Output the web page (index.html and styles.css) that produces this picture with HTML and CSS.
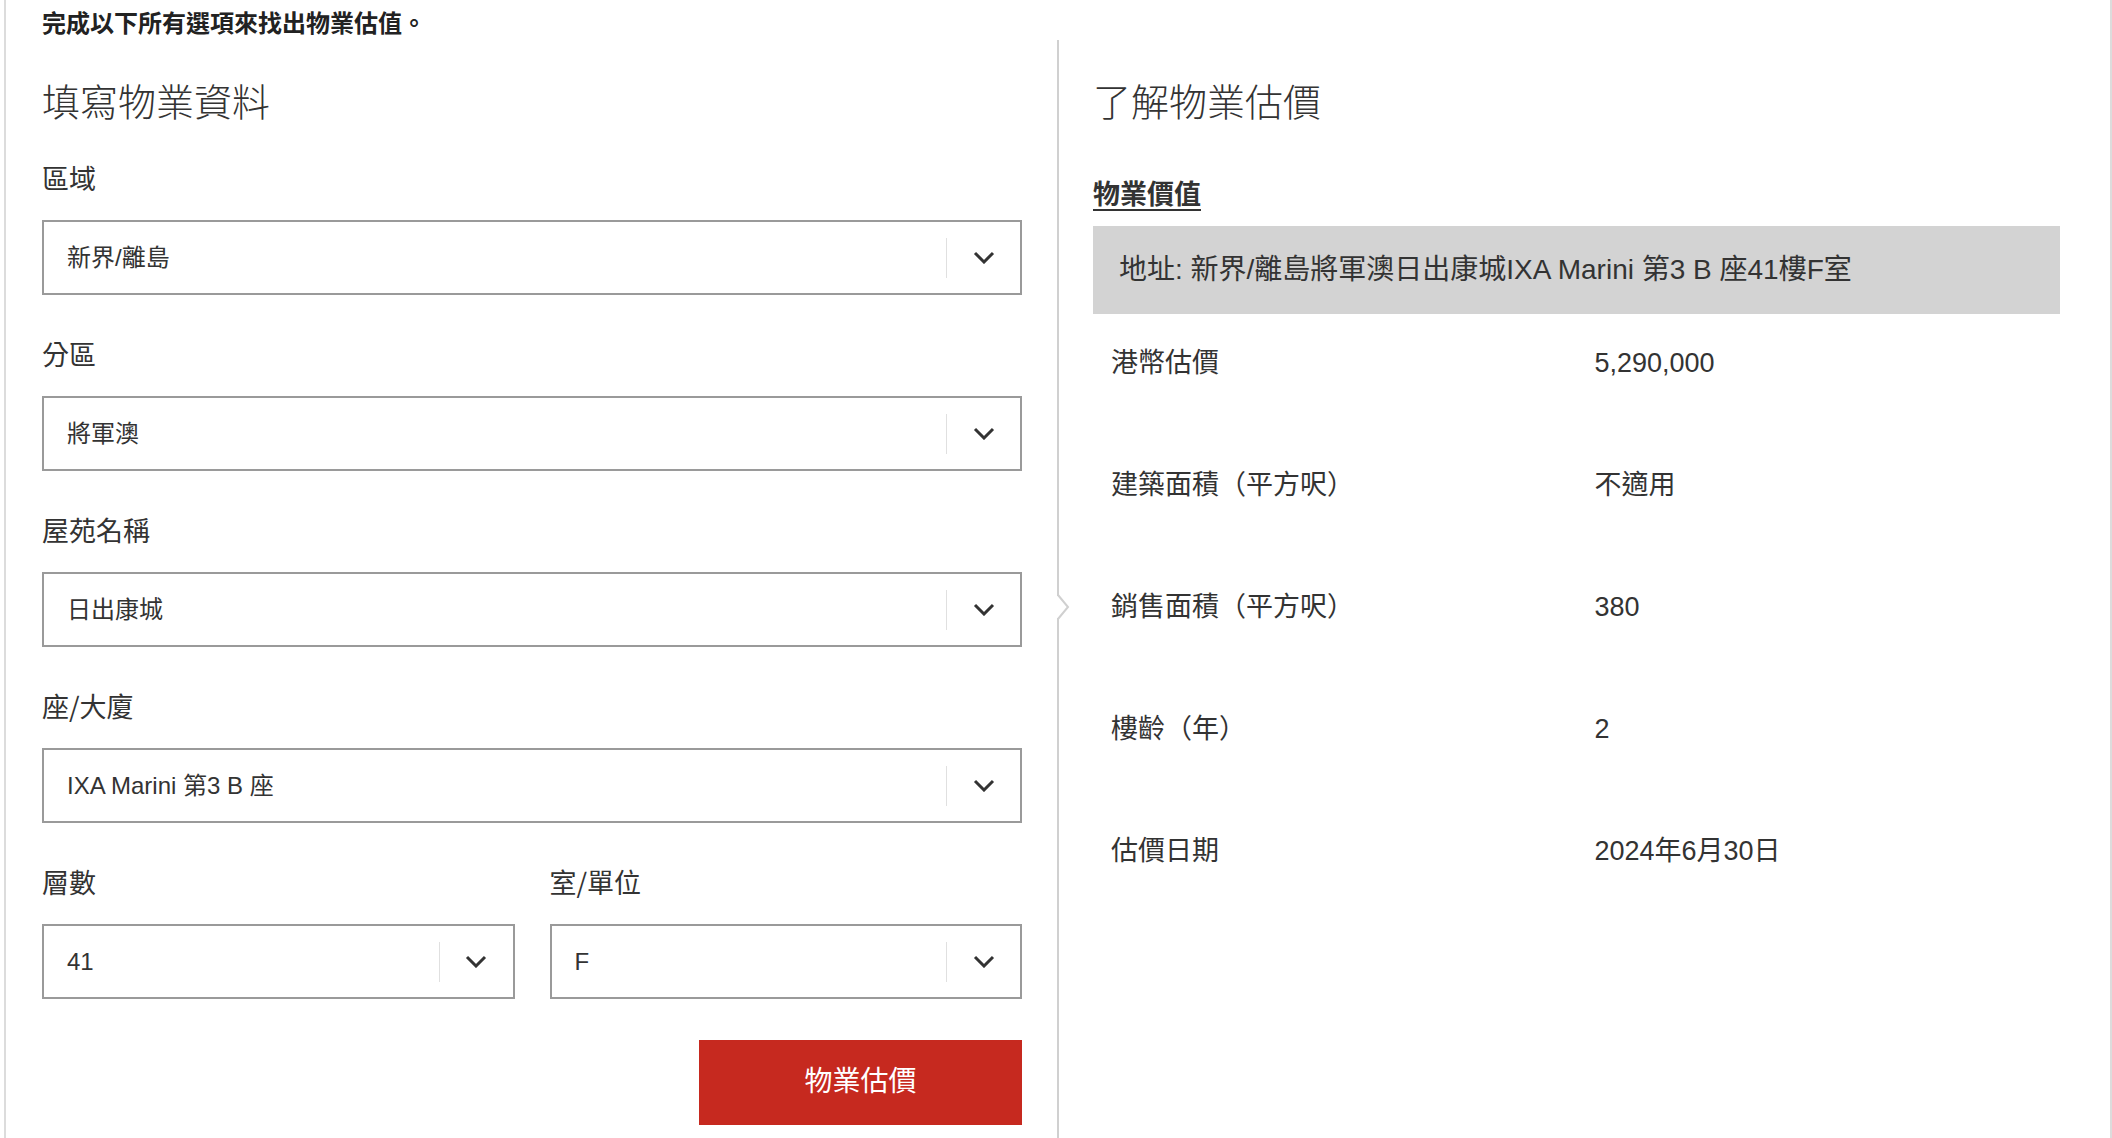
FILE: index.html
```html
<!DOCTYPE html>
<html lang="zh-Hant">
<head>
<meta charset="utf-8">
<title>物業估價</title>
<link rel="stylesheet" href="styles.css">
</head>
<body>
<div class="page">
  <p class="intro">完成以下所有選項來找出物業估值。</p>
  <div class="columns">
    <section class="form-col">
      <h2 class="col-title">填寫物業資料</h2>

      <div class="field">
        <div class="field-label">區域</div>
        <div class="select">
          <span class="select-value">新界/離島</span>
          <span class="select-arrow"><svg viewBox="0 0 22 13" width="22" height="13"><polyline points="2,2 11,11 20,2" fill="none" stroke="#333" stroke-width="3"/></svg></span>
        </div>
      </div>

      <div class="field">
        <div class="field-label">分區</div>
        <div class="select">
          <span class="select-value">將軍澳</span>
          <span class="select-arrow"><svg viewBox="0 0 22 13" width="22" height="13"><polyline points="2,2 11,11 20,2" fill="none" stroke="#333" stroke-width="3"/></svg></span>
        </div>
      </div>

      <div class="field">
        <div class="field-label">屋苑名稱</div>
        <div class="select">
          <span class="select-value">日出康城</span>
          <span class="select-arrow"><svg viewBox="0 0 22 13" width="22" height="13"><polyline points="2,2 11,11 20,2" fill="none" stroke="#333" stroke-width="3"/></svg></span>
        </div>
      </div>

      <div class="field">
        <div class="field-label">座/大廈</div>
        <div class="select">
          <span class="select-value">IXA Marini 第3 B 座</span>
          <span class="select-arrow"><svg viewBox="0 0 22 13" width="22" height="13"><polyline points="2,2 11,11 20,2" fill="none" stroke="#333" stroke-width="3"/></svg></span>
        </div>
      </div>

      <div class="field-row">
        <div class="field">
          <div class="field-label">層數</div>
          <div class="select">
            <span class="select-value">41</span>
            <span class="select-arrow"><svg viewBox="0 0 22 13" width="22" height="13"><polyline points="2,2 11,11 20,2" fill="none" stroke="#333" stroke-width="3"/></svg></span>
          </div>
        </div>
        <div class="field">
          <div class="field-label">室/單位</div>
          <div class="select">
            <span class="select-value">F</span>
            <span class="select-arrow"><svg viewBox="0 0 22 13" width="22" height="13"><polyline points="2,2 11,11 20,2" fill="none" stroke="#333" stroke-width="3"/></svg></span>
          </div>
        </div>
      </div>

      <div class="actions">
        <button class="submit" type="button">物業估價</button>
      </div>

      <svg class="notch" viewBox="0 0 14 30" width="14" height="30">
        <rect x="0" y="3" width="3" height="22" fill="#fff"/>
        <polyline points="1,2 11,14 1,26" fill="none" stroke="#d0d0d0" stroke-width="2"/>
      </svg>
    </section>

    <section class="result-col">
      <h2 class="col-title">了解物業估價</h2>
      <div class="result-subtitle">物業價值</div>
      <div class="address">地址: 新界/離島將軍澳日出康城IXA Marini 第3 B 座41樓F室</div>
      <div class="result-grid">
        <div class="cell">港幣估價</div><div class="cell">5,290,000</div>
        <div class="cell">建築面積（平方呎）</div><div class="cell">不適用</div>
        <div class="cell">銷售面積（平方呎）</div><div class="cell">380</div>
        <div class="cell">樓齡（年）</div><div class="cell">2</div>
        <div class="cell">估價日期</div><div class="cell">2024年6月30日</div>
      </div>
    </section>
  </div>
</div>
</body>
</html>
```
FILE: styles.css
```css
* { box-sizing: border-box; }

html, body {
  margin: 0;
  padding: 0;
  background: #fff;
}

body {
  font-family: "Noto Sans CJK TC", "Noto Sans", "Liberation Sans", sans-serif;
  color: #333;
}

.page {
  margin-left: 4px;
  min-height: 1138px;
  border-left: 2px solid #dcdcdc;
  border-right: 2px solid #dcdcdc;
  display: flex;
  flex-direction: column;
}

.intro {
  margin: 0;
  padding: 7px 0 3px 36px;
  font-size: 24px;
  line-height: 30px;
  font-weight: 700;
  color: #222;
}

.columns {
  flex: 1;
  display: flex;
}

.form-col {
  position: relative;
  width: 1053px;
  flex: none;
  padding: 37px 35px 13px 36px;
  border-right: 2px solid #d0d0d0;
}

.result-col {
  flex: 1;
  padding: 37px 50px 0 34px;
}

.col-title {
  margin: 0 0 38px 0;
  font-size: 38px;
  line-height: 46px;
  font-weight: 300;
  color: #333;
}

.field {
  margin-bottom: 42px;
}

.field-label {
  font-size: 27px;
  line-height: 34px;
  margin-bottom: 25px;
  color: #333;
}

.select {
  height: 75px;
  border: 2px solid #9a9a9a;
  display: flex;
  align-items: center;
  background: #fff;
}

.select-value {
  flex: 1;
  padding-left: 23px;
  font-family: "Liberation Sans", "Noto Sans CJK TC", sans-serif;
  font-size: 24px;
  line-height: 32px;
  color: #333;
  white-space: nowrap;
}

.select-arrow {
  width: 74px;
  height: 40px;
  border-left: 1px solid #e0e0e0;
  display: flex;
  align-items: center;
  justify-content: center;
}

.select-arrow svg {
  display: block;
}

.field-row {
  display: grid;
  grid-template-columns: 1fr 1fr;
  column-gap: 35px;
}

.field-row .field {
  margin-bottom: 41px;
}

.actions {
  display: flex;
  justify-content: flex-end;
}

.submit {
  width: 323px;
  height: 85px;
  border: none;
  background: #c6291f;
  color: #fff;
  font-family: inherit;
  font-size: 28px;
  line-height: 34px;
  padding: 0 0 8px 0;
  cursor: pointer;
}

.notch {
  position: absolute;
  left: 100%;
  top: 553px;
  display: block;
}

.result-col .col-title {
  margin-bottom: 53px;
}

.result-subtitle {
  font-size: 27px;
  line-height: 34px;
  font-weight: 700;
  text-decoration: underline;
  text-underline-offset: 5px;
  text-decoration-thickness: 2px;
  margin-bottom: 16px;
  display: inline-block;
}

.address {
  background: #d3d3d3;
  padding: 24px 26px;
  font-family: "Liberation Sans", "Noto Sans CJK TC", sans-serif;
  font-size: 28px;
  line-height: 40px;
  color: #333;
  white-space: nowrap;
}

.result-grid {
  display: grid;
  grid-template-columns: 1fr 1fr;
}

.cell {
  padding: 29px 17px 53px 18px;
  font-family: "Liberation Sans", "Noto Sans CJK TC", sans-serif;
  font-size: 27px;
  line-height: 40px;
  color: #333;
}
```
